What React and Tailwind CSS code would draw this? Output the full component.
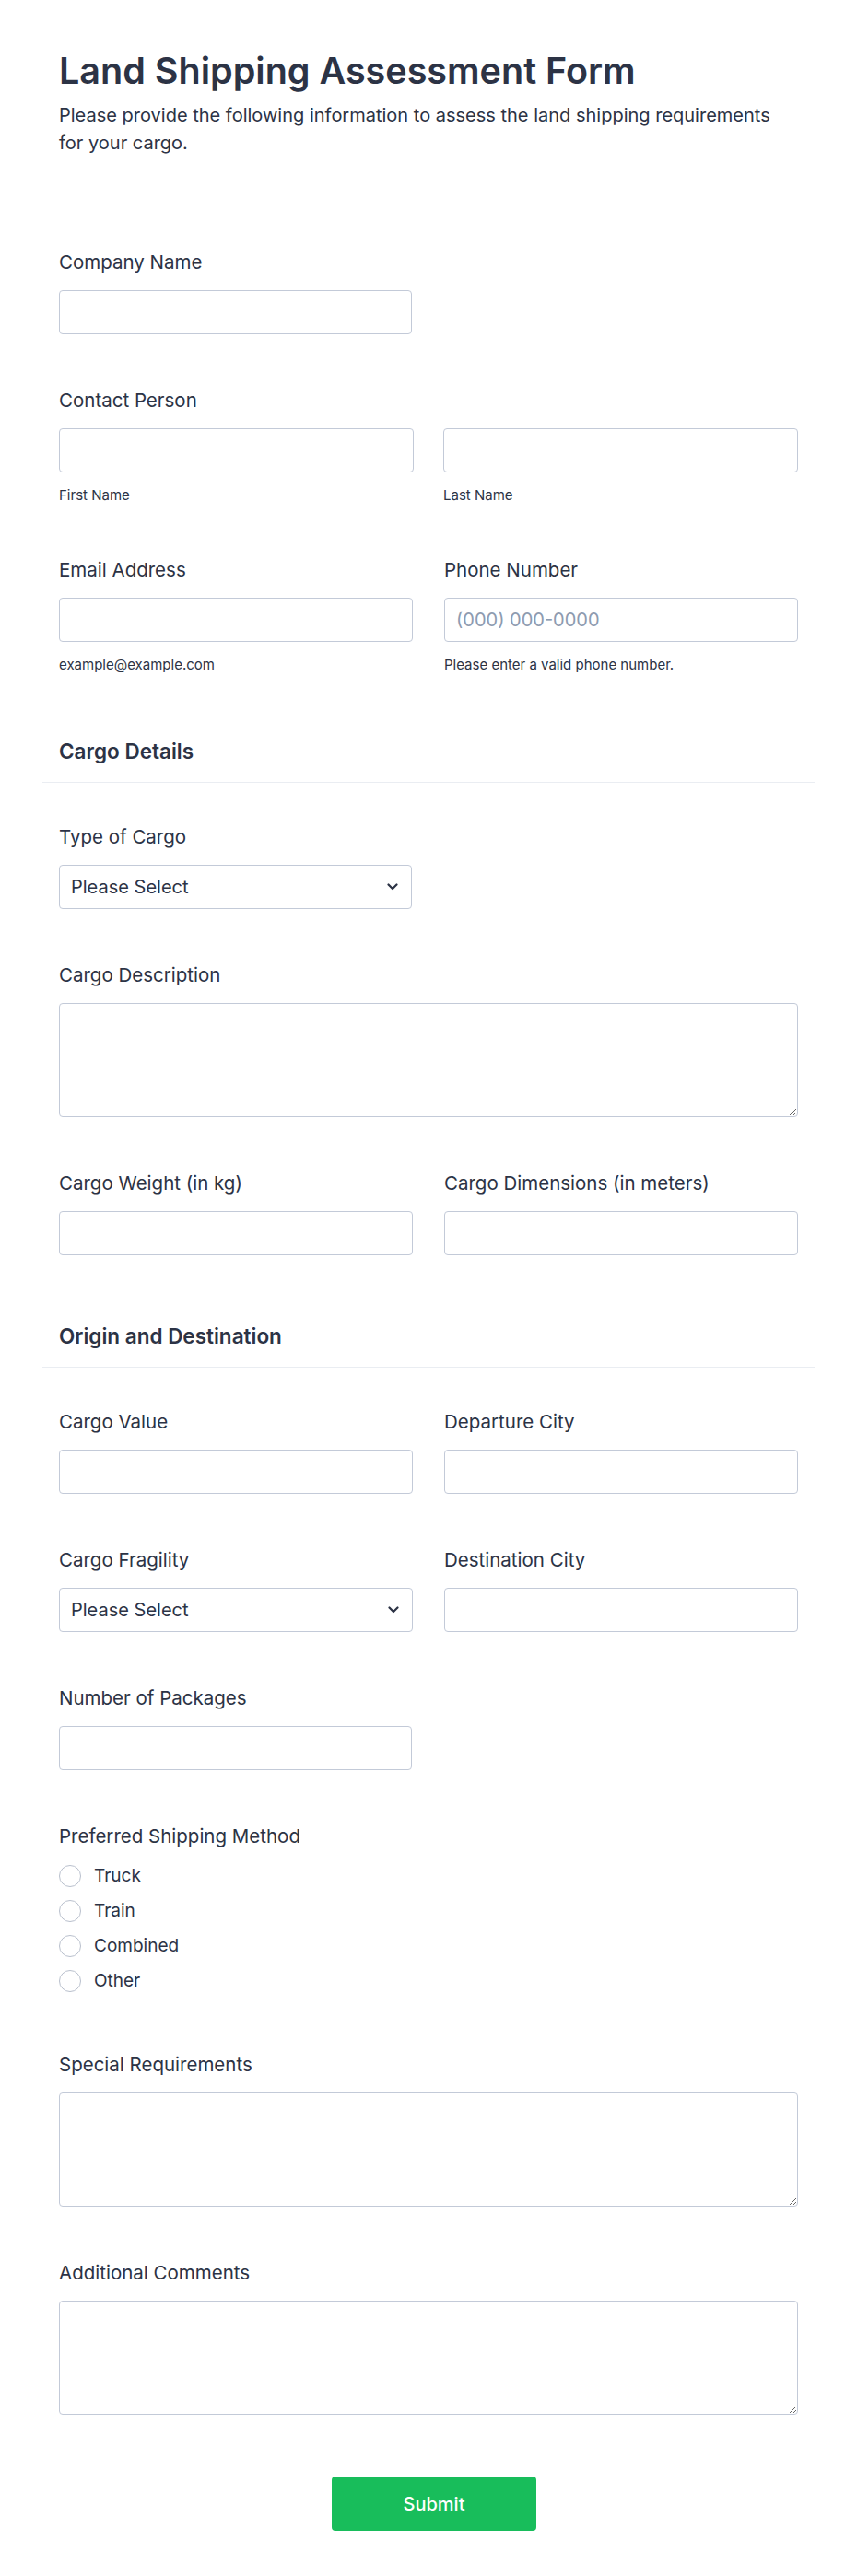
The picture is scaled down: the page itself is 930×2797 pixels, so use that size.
import React from 'react';

const Label = ({ children }) => (
  <label className="block text-[20.5px] leading-[24px] font-normal text-[#2c3345]">{children}</label>
);

const TextInput = ({ placeholder }) => (
  <input
    type="text"
    placeholder={placeholder}
    className="block w-full h-[48px] px-3 rounded-[4px] border border-[#c3cad8] bg-white text-[20px] text-[#2c3345] placeholder:text-[#8d9bb0] outline-none"
  />
);

const SelectBox = () => (
  <div className="relative w-full h-[48px]">
    <select className="appearance-none block w-full h-full pl-3 pr-10 rounded-[4px] border border-[#c3cad8] bg-white text-[20px] text-[#2c3345] outline-none">
      <option>Please Select</option>
    </select>
    {/* chevron */}
    <svg className="absolute right-[15px] top-1/2 -translate-y-1/2 pointer-events-none" width="12" height="8" viewBox="0 0 12 8" fill="none">
      <path d="M1.5 1.5L6 6L10.5 1.5" stroke="#2c3345" strokeWidth="2.2" strokeLinecap="round" strokeLinejoin="round" />
    </svg>
  </div>
);

const TextArea = () => (
  <textarea className="block w-full h-[124px] px-3 py-2 rounded-[4px] border border-[#c3cad8] bg-white text-[20px] text-[#2c3345] outline-none" />
);

const SubLabel = ({ children }) => (
  <div className="mt-4 text-[15px] leading-[18px] text-[#2c3345]">{children}</div>
);

const Field = ({ label, children }) => (
  <div>
    <Label>{label}</Label>
    <div className="mt-[18px]">{children}</div>
  </div>
);

const Item = ({ children, className = '' }) => (
  <li className={`px-[18px] pt-[30px] ${className || 'pb-[30px]'}`}>{children}</li>
);

const SectionHeading = ({ title, className = 'pt-[41px]' }) => (
  <li className={`${className} pb-[19px] border-b border-[#eaedf2] mb-[17px]`}>
    <h2 className="px-[18px] text-[22.5px] leading-[28px] font-semibold text-[#2c3345]">{title}</h2>
  </li>
);

const Radio = ({ label }) => (
  <label className="flex items-center h-[38px] gap-[14px]">
    <span className="w-[24px] h-[24px] rounded-full border-[1.5px] border-[#b9c0cd] bg-white shrink-0"></span>
    <span className="text-[19px] text-[#2c3345]">{label}</span>
  </label>
);

export default function App() {
  return (
    <div className="w-[930px] min-h-[2797px] bg-white" style={{ fontFamily: 'Inter, "Noto Sans", sans-serif' }}>
      {/* Header */}
      <div className="px-16 pt-[53px] pb-[51px] border-b border-[#dfe2ea]">
        <h1 className="text-[39.5px] leading-[48px] font-semibold text-[#2c3345]">Land Shipping Assessment Form</h1>
        <p className="mt-[9px] text-[20px] leading-[30px] text-[#2c3345]">
          Please provide the following information to assess the land shipping requirements for your cargo.
        </p>
      </div>

      {/* Form */}
      <ul className="px-[46px] pt-[21px]">
        <Item>
          <Field label="Company Name">
            <div className="w-[383px]"><TextInput /></div>
          </Field>
        </Item>

        <Item>
          <Label>Contact Person</Label>
          <div className="mt-[18px] grid grid-cols-2 gap-[32px]">
            <div>
              <TextInput />
              <SubLabel>First Name</SubLabel>
            </div>
            <div>
              <TextInput />
              <SubLabel>Last Name</SubLabel>
            </div>
          </div>
        </Item>

        <Item>
          <div className="grid grid-cols-2 gap-[34px]">
            <Field label="Email Address">
              <TextInput />
              <SubLabel>example@example.com</SubLabel>
            </Field>
            <Field label="Phone Number">
              <TextInput placeholder="(000) 000-0000" />
              <SubLabel>Please enter a valid phone number.</SubLabel>
            </Field>
          </div>
        </Item>

        <SectionHeading title="Cargo Details" />

        <Item>
          <Field label="Type of Cargo">
            <div className="w-[383px]"><SelectBox /></div>
          </Field>
        </Item>

        <Item>
          <Field label="Cargo Description">
            <TextArea />
          </Field>
        </Item>

        <Item>
          <div className="grid grid-cols-2 gap-[34px]">
            <Field label="Cargo Weight (in kg)">
              <TextInput />
            </Field>
            <Field label="Cargo Dimensions (in meters)">
              <TextInput />
            </Field>
          </div>
        </Item>

        <SectionHeading title="Origin and Destination" className="pt-[44px]" />

        <Item>
          <div className="grid grid-cols-2 gap-[34px]">
            <Field label="Cargo Value">
              <TextInput />
            </Field>
            <Field label="Departure City">
              <TextInput />
            </Field>
          </div>
        </Item>

        <Item>
          <div className="grid grid-cols-2 gap-[34px]">
            <Field label="Cargo Fragility">
              <SelectBox />
            </Field>
            <Field label="Destination City">
              <TextInput />
            </Field>
          </div>
        </Item>

        <Item>
          <Field label="Number of Packages">
            <div className="w-[383px]"><TextInput /></div>
          </Field>
        </Item>

        <Item>
          <Label>Preferred Shipping Method</Label>
          <div className="mt-[12px] flex flex-col">
            <Radio label="Truck" />
            <Radio label="Train" />
            <Radio label="Combined" />
            <Radio label="Other" />
          </div>
        </Item>

        <Item>
          <Field label="Special Requirements">
            <TextArea />
          </Field>
        </Item>

        <Item className="pb-[29px]">
          <Field label="Additional Comments">
            <TextArea />
          </Field>
        </Item>
      </ul>

      {/* Footer */}
      <div className="border-t border-[#e6e9ef] pt-[37px] pb-[49px] pl-[12px] flex justify-center">
        <button className="w-[222px] h-[59px] rounded-[4px] bg-[#18bd5b] text-white text-[20px] font-medium">
          Submit
        </button>
      </div>
    </div>
  );
}
